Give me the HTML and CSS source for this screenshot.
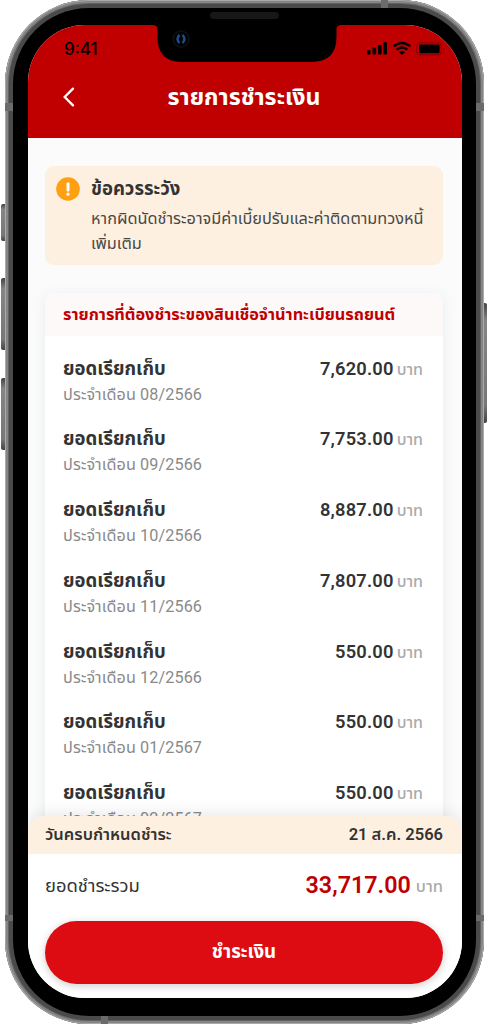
FILE: index.html
```html
<!DOCTYPE html>
<html lang="th">
<head>
<meta charset="utf-8">
<title>รายการชำระเงิน</title>
<link rel="stylesheet" href="styles.css">
</head>
<body>
<div class="phone">
  <i class="key key-mute"></i><i class="key key-up"></i><i class="key key-down"></i><i class="key key-power"></i>
  <div class="shell">
    <i class="band band-tl"></i><i class="band band-tr"></i><i class="band band-bl"></i><i class="band band-br"></i><i class="band band-top"></i><i class="band band-bottom"></i>
    <div class="bezel">
      <div class="screen">
        <header class="header">
          <div class="status">
            <span class="clock">9:41</span>
            <svg class="status-icons" width="80" height="16" viewBox="0 0 80 16">
              <rect x="1" y="9" width="3.6" height="4.6" rx="1"/><rect x="6.5" y="6.5" width="3.6" height="7.1" rx="1"/><rect x="12" y="4" width="3.6" height="9.600" rx="1"/><rect x="17.400" y="1.300" width="3.600" height="12.300" rx="1"/>
              <g fill="none" stroke="#000" stroke-width="2.300"><path d="M27.700 5.400Q36 -1.500 44.300 5.400"/><path d="M30.600 8.700Q36 4.200 41.400 8.700"/></g>
              <path d="M33 11.100Q36 8.900 39 11.100L36 13.900Z"/>
              <rect x="50.700" y="1.800" width="24.600" height="12" rx="3.200" fill="none" stroke="#820000" stroke-width="1"/>
              <rect x="53" y="3.600" width="20.600" height="8.600" rx="1.400"/>
              <path d="M77 6v4q1.600-.5 1.600-2T77 6" fill="#820000"/>
            </svg>
          </div>
          <div class="navbar">
            <svg class="back" width="14" height="22" viewBox="0 0 14 22"><path d="M11 2.600 2.700 11l8.300 8.400"/></svg>
            <h1 class="title">รายการชำระเงิน</h1>
          </div>
        </header>
        <main class="content">
          <section class="notice">
            <svg class="notice-icon" width="24" height="24" viewBox="0 0 24 24"><circle cx="12" cy="12" r="11.800" fill="#ff9f12"/><path d="M12 6.700v6.200" stroke="#fff" stroke-width="3" stroke-linecap="round"/><circle cx="12" cy="17.200" r="1.600" fill="#fff"/></svg>
            <div>
              <h2 class="notice-title">ข้อควรระวัง</h2>
              <p class="notice-text">หากผิดนัดชำระอาจมีค่าเบี้ยปรับและค่าติดตามทวงหนี้<br>เพิ่มเติม</p>
            </div>
          </section>
          <section class="bills">
            <h2 class="bills-title"><span>รายการที่ต้องชำระของสินเชื่อจำนำทะเบียนรถยนต์</span></h2>
            <ul class="bill-list">
              <li class="bill"><div><b class="name">ยอดเรียกเก็บ</b><p class="month">ประจำเดือน 08/2566</p></div><p class="amount">7,620.00<span class="unit">บาท</span></p></li>
              <li class="bill"><div><b class="name">ยอดเรียกเก็บ</b><p class="month">ประจำเดือน 09/2566</p></div><p class="amount">7,753.00<span class="unit">บาท</span></p></li>
              <li class="bill"><div><b class="name">ยอดเรียกเก็บ</b><p class="month">ประจำเดือน 10/2566</p></div><p class="amount">8,887.00<span class="unit">บาท</span></p></li>
              <li class="bill"><div><b class="name">ยอดเรียกเก็บ</b><p class="month">ประจำเดือน 11/2566</p></div><p class="amount">7,807.00<span class="unit">บาท</span></p></li>
              <li class="bill"><div><b class="name">ยอดเรียกเก็บ</b><p class="month">ประจำเดือน 12/2566</p></div><p class="amount">550.00<span class="unit">บาท</span></p></li>
              <li class="bill"><div><b class="name">ยอดเรียกเก็บ</b><p class="month">ประจำเดือน 01/2567</p></div><p class="amount">550.00<span class="unit">บาท</span></p></li>
              <li class="bill"><div><b class="name">ยอดเรียกเก็บ</b><p class="month">ประจำเดือน 02/2567</p></div><p class="amount">550.00<span class="unit">บาท</span></p></li>
            </ul>
          </section>
        </main>
        <footer class="summary">
          <div class="due"><span class="due-label">วันครบกำหนดชำระ</span><span class="due-date">21 ส.ค. 2566</span></div>
          <div class="total"><span class="total-label">ยอดชำระรวม</span><p class="total-amount">33,717.00<span class="unit">บาท</span></p></div>
          <button class="pay">ชำระเงิน</button>
        </footer>
      </div>
      <svg class="notch" width="190" height="40" viewBox="0 0 190 40">
        <path d="M0 0H190V3Q184.500 3 184.500 7V15Q184.500 40 159 40H30Q5.500 40 5.500 15V7Q5.500 3 0 3Z"/>
        <circle cx="29" cy="17" r="8" fill="#020304" stroke="#0d1014" stroke-width="1.500"/>
        <path d="M27.500 13q-4 4 0 8M30.500 13q4 4 0 8" fill="none" stroke="#234b80" stroke-width="2.500"/>
      </svg>
      <i class="speaker"></i>
    </div>
  </div>
</div>
</body>
</html>
```
FILE: styles.css
```css
* { box-sizing: border-box; }
body, h1, h2, p, ul { margin: 0; padding: 0; }
body { background: #fff; width: 488px; height: 1024px; overflow: hidden; color: #333; font-family: Roboto, "Noto Sans Thai", "Noto Sans", sans-serif; }
.phone { position: relative; height: 1024px; padding: 0 4px 0 5px; }
.shell { position: relative; height: 1024px; padding: 8px; border-radius: 84px; background: #4a4a4a; box-shadow: inset 0 0 0 1px #aaa, inset 0 0 0 3px #858585, inset 0 0 0 4px #626262; }
.bezel { position: relative; height: 1008px; padding: 17px 14px 18px 15px; border-radius: 76px; background: #000; }
.screen { display: flex; flex-direction: column; height: 973px; border-radius: 57px; overflow: hidden; background: #fbfbfb; }
.key { position: absolute; width: 4px; border-radius: 2px 0 0 2px; background: linear-gradient(#444, #858585 15%, #777 85%, #444); }
.key-mute { left: 1px; top: 204px; height: 37px; }
.key-up { left: 1px; top: 278px; height: 72px; }
.key-down { left: 1px; top: 378px; height: 72px; }
.key-power { right: 1px; width: 4px; top: 303px; height: 120px; border-radius: 0 2px 2px 0; }
.band { position: absolute; background: #6b6b6b; }
.band-tl, .band-tr { top: 103px; width: 8px; height: 8px; }
.band-bl, .band-br { top: 915px; width: 8px; height: 6px; }
.band-tl, .band-bl { left: 0; }
.band-tr, .band-br { right: 0; }
.band-top, .band-bottom { width: 7px; height: 8px; }
.band-top { left: 376px; top: 0; }
.band-bottom { left: 96px; bottom: 0; }
.notch { position: absolute; left: 139px; top: 14px; }
.speaker { position: absolute; left: 197px; top: 4px; width: 69px; height: 7px; border-radius: 4px; background: #171717; }
.header { flex: none; height: 113px; background: #c00000; }
.status { display: flex; justify-content: space-between; height: 48px; padding: 16px 16px 0 36px; }
.clock { color: #000; font: 500 17px/16px Inter, sans-serif; }
.status-icons { flex: none; }
.navbar { display: flex; align-items: center; height: 47px; padding: 0 34px; }
.back { flex: none; fill: none; stroke: #fff; stroke-width: 2.300; stroke-linecap: round; }
.title { flex: 1; margin-right: 16px; text-align: center; color: #fff; font-size: 23.200px; line-height: 36px; font-weight: 700; }
.content { flex: 1; min-height: 0; padding: 28px 19px 0 17px; overflow: hidden; }
.notice { display: flex; gap: 11px; height: 99px; padding: 11px 11px 0; border-radius: 9px; background: #fef0e0; }
.notice-icon { flex: none; }
.notice-title { font-size: 18.500px; line-height: 24px; font-weight: 700; }
.notice-text { margin-top: 6px; white-space: nowrap; font-size: 16.300px; line-height: 24.500px; color: #484848; }
.bills { margin-top: 28px; border-radius: 9px; background: #fff; box-shadow: 0 2px 14px rgba(90, 130, 160, .13); }
.bills-title { height: 43px; padding: 0 18px; border-radius: 9px 9px 0 0; background: #fef9f9; color: #c00000; white-space: nowrap; font-size: 16.300px; line-height: 43px; }
.bill-list { padding: 19.500px 20px 0 18px; list-style: none; }
.bill { display: flex; justify-content: space-between; height: 70.800px; }
.name { display: block; font-size: 18.500px; line-height: 26px; }
.month { color: #8a8a8a; font-size: 16.200px; line-height: 25px; letter-spacing: .1px; }
.amount { font-size: 18.300px; line-height: 25px; font-weight: 600; letter-spacing: .2px; }
.unit { margin-left: 3px; color: #aaa; font-size: 16px; font-weight: 500; letter-spacing: 0; }
.summary { position: relative; flex: none; height: 182px; border-radius: 18px 18px 0 0; background: #fff; box-shadow: 0 -3px 16px rgba(0, 0, 0, .09); }
.due { display: flex; justify-content: space-between; height: 38px; padding: 0 19px 0 17px; border-radius: 18px 18px 0 0; background: #fef0e0; font-size: 16.500px; line-height: 38px; font-weight: 600; }
.total { display: flex; justify-content: space-between; height: 67px; padding: 0 19px 0 17px; line-height: 63px; }
.total-label { font-size: 18.400px; }
.total-amount { color: #c00000; font-size: 23.300px; font-weight: 600; }
.total .unit { margin-left: 5px; vertical-align: 1px; font-size: 16.500px; line-height: 20px; }
.pay { display: block; width: 398px; height: 63px; margin-left: 17px; border: 0; border-radius: 32px; background: #dd0c13; box-shadow: 0 2px 8px rgba(0, 0, 0, .2); color: #fff; font: 700 18.700px/63px Roboto, "Noto Sans Thai", sans-serif; padding: 0; }
```
